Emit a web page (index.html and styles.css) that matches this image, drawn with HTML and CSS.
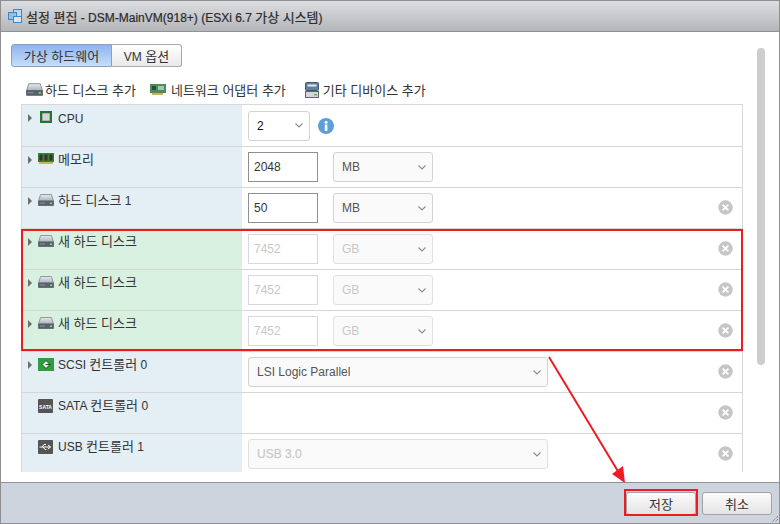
FILE: index.html
```html
<!DOCTYPE html>
<html lang="ko">
<head>
<meta charset="utf-8">
<title>설정 편집</title>
<link rel="stylesheet" href="styles.css">
</head>
<body>
<svg class="defs" width="0" height="0" aria-hidden="true">
  <defs>
    <linearGradient id="diskTop" x1="0" y1="0" x2="0" y2="1">
      <stop offset="0" stop-color="#e6e9ec"/><stop offset="1" stop-color="#aab3bc"/>
    </linearGradient>
    <symbol id="disk" viewBox="0 0 16 12">
      <path d="M2.600 .5h10.800l2.100 6.500H.5z" fill="url(#diskTop)" stroke="#7d858d" stroke-width=".8"/>
      <path d="M.5 7h15v4.500H.5z" fill="#59626b" stroke="#59626b" stroke-width=".8"/>
      <rect x="12" y="8.500" width="2" height="1.500" fill="#8fdc6a"/>
      <rect x="2" y="8.500" width="5" height="1" fill="#8a939c"/>
    </symbol>
    <symbol id="tri" viewBox="0 0 4 8"><path d="M0 0l4 4-4 4z" fill="#6e6e6e"/></symbol>
    <symbol id="chev" viewBox="0 0 8 5"><path d="M.5 .5l3.500 3.500 3.500-3.500" fill="none" stroke="#8c8c8c" stroke-width="1.100"/></symbol>
    <symbol id="close" viewBox="0 0 15 15">
      <circle cx="7.500" cy="7.500" r="7.200" fill="#c6c6c6"/>
      <path d="M4.600 4.600l5.800 5.800M10.400 4.600l-5.800 5.800" stroke="#fff" stroke-width="1.900"/>
    </symbol>
  </defs>
</svg>
<div class="window">
  <header class="titlebar">
    <svg class="title-icon" viewBox="0 0 16 16" width="16" height="16">
      <rect x="6.500" y="1.500" width="8" height="7" fill="#bcd9f2" stroke="#3f86c6"/>
      <rect x="1.500" y="4.500" width="8" height="7" fill="#8fc0e8" stroke="#3f86c6"/>
      <rect x="6.500" y="8.500" width="8" height="6" fill="#d6e8f7" stroke="#3f86c6"/>
    </svg>
    <span class="title-text"><span class="ko">설정 편집</span> - DSM-MainVM(918+) (ESXi 6.7 <span class="ko">가상 시스템</span>)</span>
  </header>
  <main class="content">
    <nav class="tabs">
      <button class="tab tab-active"><span class="ko">가상 하드웨어</span></button>
      <button class="tab">VM <span class="ko">옵션</span></button>
    </nav>
    <div class="toolbar">
      <span class="tool tool-disk">
        <svg class="tool-icon" width="17" height="15"><use href="#disk"/></svg><span class="ko">하드 디스크 추가</span>
      </span>
      <span class="tool tool-net">
        <svg class="tool-icon" viewBox="0 0 16 11" width="16" height="11">
          <rect width="16" height="9" fill="#4d8a5f"/>
          <rect x="2" y="2" width="4" height="4" fill="#2c4d38"/>
          <rect x="8" y="2" width="6" height="4" fill="#a5c7ae"/>
          <rect x="2" y="9" width="11" height="2" fill="#c9b45d"/>
        </svg><span class="ko">네트워크 어댑터 추가</span>
      </span>
      <span class="tool tool-other">
        <svg class="tool-icon" viewBox="0 0 14 16" width="14" height="16">
          <rect x=".5" y=".5" width="13" height="8" rx="1" fill="#5f7f9e" stroke="#46596b"/>
          <rect x="2.500" y="2.500" width="9" height="2" fill="#dfe9f2"/>
          <rect x=".5" y="9.500" width="13" height="6" fill="#d3d8dc" stroke="#5b6670"/>
          <rect x="9" y="12" width="3" height="1.500" fill="#6fb04f"/>
        </svg><span class="ko">기타 디바이스 추가</span>
      </span>
    </div>
    <div class="scroller">
      <div class="hw-table">
        <div class="row">
          <div class="label"><svg class="tri" width="4" height="8"><use href="#tri"/></svg>
            <span class="icon-box icon-cpu"><svg viewBox="0 0 12 12" width="12" height="12">
              <rect width="12" height="12" fill="#1f7a2c"/><rect x="2" y="2" width="8" height="8" fill="#d4d7d4" stroke="#555" stroke-width=".6"/>
            </svg></span><span class="latin-only">CPU</span></div>
          <div class="value">
            <div class="select s-cpu"><span class="strong">2</span><svg class="chev" width="8" height="5"><use href="#chev"/></svg></div>
            <svg class="info" viewBox="0 0 16 16" width="16" height="16">
              <circle cx="8" cy="8" r="8" fill="#5d9fd8"/>
              <rect x="6.800" y="6.500" width="2.600" height="6.500" fill="#fff"/>
              <circle cx="8.100" cy="4.300" r="1.500" fill="#fff"/>
            </svg>
          </div>
        </div>
        <div class="row">
          <div class="label"><svg class="tri" width="4" height="8"><use href="#tri"/></svg>
            <span class="icon-box"><svg viewBox="0 0 16 11" width="16" height="11">
              <rect width="16" height="9" fill="#3d7f2e"/>
              <rect x="1.500" y="1.500" width="3" height="6" fill="#333"/><rect x="6.500" y="1.500" width="3" height="6" fill="#333"/><rect x="11.500" y="1.500" width="3" height="6" fill="#333"/>
              <rect x="1" y="9" width="14" height="2" fill="#c9b45d"/>
            </svg></span><span class="ko">메모리</span></div>
          <div class="value"><div class="input">2048</div><div class="select s-unit"><span>MB</span><svg class="chev" width="8" height="5"><use href="#chev"/></svg></div></div>
        </div>
        <div class="row">
          <div class="label"><svg class="tri" width="4" height="8"><use href="#tri"/></svg><span class="icon-box"><svg width="16" height="12"><use href="#disk"/></svg></span><span><span class="ko">하드 디스크</span> 1</span></div>
          <div class="value"><div class="input">50</div><div class="select s-unit"><span>MB</span><svg class="chev" width="8" height="5"><use href="#chev"/></svg></div><svg class="close" width="15" height="15"><use href="#close"/></svg></div>
        </div>
        <div class="row row-new">
          <div class="label"><svg class="tri" width="4" height="8"><use href="#tri"/></svg><span class="icon-box"><svg width="16" height="12"><use href="#disk"/></svg></span><span class="ko">새 하드 디스크</span></div>
          <div class="value"><div class="input disabled">7452</div><div class="select s-unit disabled"><span>GB</span><svg class="chev" width="8" height="5"><use href="#chev"/></svg></div><svg class="close" width="15" height="15"><use href="#close"/></svg></div>
        </div>
        <div class="row row-new">
          <div class="label"><svg class="tri" width="4" height="8"><use href="#tri"/></svg><span class="icon-box"><svg width="16" height="12"><use href="#disk"/></svg></span><span class="ko">새 하드 디스크</span></div>
          <div class="value"><div class="input disabled">7452</div><div class="select s-unit disabled"><span>GB</span><svg class="chev" width="8" height="5"><use href="#chev"/></svg></div><svg class="close" width="15" height="15"><use href="#close"/></svg></div>
        </div>
        <div class="row row-new">
          <div class="label"><svg class="tri" width="4" height="8"><use href="#tri"/></svg><span class="icon-box"><svg width="16" height="12"><use href="#disk"/></svg></span><span class="ko">새 하드 디스크</span></div>
          <div class="value"><div class="input disabled">7452</div><div class="select s-unit disabled"><span>GB</span><svg class="chev" width="8" height="5"><use href="#chev"/></svg></div><svg class="close" width="15" height="15"><use href="#close"/></svg></div>
        </div>
        <div class="row">
          <div class="label"><svg class="tri" width="4" height="8"><use href="#tri"/></svg>
            <span class="icon-box"><svg viewBox="0 0 16 13" width="16" height="13">
              <rect width="16" height="13" fill="#2f9e3f"/><path d="M8 2.500l-4 4 4 4 4-4z" fill="#e8f5e8" stroke="#14541f"/><path d="M7.500 6.500h5" stroke="#14541f"/>
            </svg></span><span>SCSI <span class="ko">컨트롤러</span> 0</span></div>
          <div class="value"><div class="select s-wide"><span>LSI Logic Parallel</span><svg class="chev" width="8" height="5"><use href="#chev"/></svg></div><svg class="close" width="15" height="15"><use href="#close"/></svg></div>
        </div>
        <div class="row">
          <div class="label label-plain">
            <span class="icon-box"><svg viewBox="0 0 15 14" width="15" height="14"><rect width="15" height="14" rx="1" fill="#555"/><text x="7.500" y="9.500" class="chip-text">SATA</text></svg></span><span>SATA <span class="ko">컨트롤러</span> 0</span></div>
          <div class="value"><svg class="close" width="15" height="15"><use href="#close"/></svg></div>
        </div>
        <div class="row">
          <div class="label label-plain">
            <span class="icon-box"><svg viewBox="0 0 15 14" width="15" height="14"><rect width="15" height="14" rx="1" fill="#555"/><path d="M1.500 7h11M10 5l2.500 2-2.500 2M4 7l2-2.500h2M5 7l2 2.500h1.500" fill="none" stroke="#fff"/></svg></span><span>USB <span class="ko">컨트롤러</span> 1</span></div>
          <div class="value"><div class="select s-wide disabled"><span class="faint-bold">USB 3.0</span><svg class="chev" width="8" height="5"><use href="#chev"/></svg></div><svg class="close" width="15" height="15"><use href="#close"/></svg></div>
        </div>
      </div>
    </div>
    <div class="scrollbar"></div>
  </main>
  <footer class="footer">
    <button class="btn"><span class="ko">저장</span></button>
    <button class="btn"><span class="ko">취소</span></button>
    <svg class="grip" viewBox="0 0 8 8" width="8" height="8"><path d="M7 1L1 7M7 4L4 7M7 7h0" stroke="#666" stroke-dasharray="1 1"/></svg>
  </footer>
  <div class="highlight"></div>
  <div class="highlight-save"></div>
  <svg class="arrow" viewBox="0 0 780 524" width="780" height="524">
    <path d="M549 357L619 473" stroke="#ed1c24" stroke-width="2" fill="none"/>
    <path d="M625 483L612 474 623 466z" fill="#ed1c24"/>
  </svg>
</div>
</body>
</html>
```
FILE: styles.css
```css
* { box-sizing: border-box; }
html, body { margin: 0; padding: 0; }
body {
  width: 780px;
  height: 524px;
  overflow: hidden;
  font: 12px "Liberation Sans", "Noto Sans CJK KR", sans-serif;
  color: #333;
  background: #fff;
}
.ko { font-size: 13px; }
.strong { color: #111; }
.latin-only { padding-top: 1px; }
.defs { position: absolute; }
.window {
  position: relative;
  width: 780px;
  height: 524px;
  display: flex;
  flex-direction: column;
  border: 1px solid #8f8f8f;
  background: #fff;
}
.titlebar {
  height: 31px;
  flex: none;
  display: flex;
  align-items: center;
  padding-left: 6px;
  gap: 3px;
  background: linear-gradient(#dcdde1, #b4b6b9);
  border-bottom: 1px solid #8f9194;
}
.title-text { font-size: 12px; font-weight: 400; color: #2b2b2b; -webkit-text-stroke: .2px #2b2b2b; }
.content {
  flex: 1;
  min-height: 0;
  overflow: hidden;
  display: flex;
  flex-direction: column;
  padding: 12px 0 10px 10px;
  position: relative;
}
.tabs { display: flex; flex: none; height: 23px; }
.tab {
  font: inherit;
  color: #333;
  padding: 0;
  height: 23px;
  width: 70px;
  background: linear-gradient(#fff, #e9e9e9);
  border: 1px solid #a9a9a9;
  border-left: 0;
  border-radius: 0 3px 3px 0;
}
.tab.tab-active {
  width: 101px;
  background: linear-gradient(#8fb4ee, #c5defa);
  border: 1px solid #8e9fb8;
  border-radius: 3px 0 0 3px;
}
.toolbar {
  flex: none;
  height: 37px;
  display: flex;
  align-items: center;
  padding: 8px 0 0 15px;
  color: #333;
}
.tool { display: flex; align-items: center; margin-right: 14px; white-space: nowrap; }
.tool-disk { gap: 2px; }
.tool-net { margin-right: 19px; gap: 5px; }
.tool-other { gap: 4px; }
.scroller { flex: 1; min-height: 0; overflow: hidden; padding-left: 10px; }
.hw-table {
  width: 722px;
  border: 1px solid #d8d8d8;
  border-bottom: 0;
}
.row { display: flex; height: 41px; }
.row + .row .label { border-top: 1px solid #d6d6d6; }
.row + .row .value { border-top: 1px solid #d6d6d6; }
.label {
  width: 220px;
  flex: none;
  display: flex;
  align-items: flex-start;
  padding: 4px 0 0 6px;
  background: #e3eef5;
  color: #333;
  line-height: 18px;
}
.row-new .label { background: #d8f0e0; }
.tri { margin: 5px 6px 0 0; flex: none; }
.icon-box { width: 20px; height: 18px; flex: none; display: flex; align-items: flex-start; padding-top: 2px; }
.icon-cpu { padding-left: 2px; }
.label-plain { padding-left: 16px; }
.chip-text { font: 700 5px "Liberation Sans", sans-serif; fill: #fff; text-anchor: middle; }
.value {
  flex: 1;
  display: flex;
  align-items: center;
  padding: 0 9px 0 6px;
}
.input {
  width: 70px;
  height: 30px;
  border: 1px solid #8f8f8f;
  padding: 0 5px;
  display: flex;
  align-items: center;
  color: #333;
  margin-right: 15px;
}
.input.disabled { border-color: #d8d8d8; color: #c8c8c8; }
.select {
  height: 30px;
  display: flex;
  align-items: center;
  justify-content: space-between;
  padding: 0 6px 0 8px;
  background: #fafafa;
  border: 1px solid #d2d2d2;
  border-radius: 3px;
  color: #555;
}
.select.disabled { color: #c8c8c8; border-color: #e0e0e0; }
.faint-bold { -webkit-text-stroke: .2px #c8c8c8; }
.s-cpu { width: 62px; background: #fff; }
.s-unit { width: 100px; }
.s-wide { width: 300px; }
.info { margin-left: 8px; }
.close { margin-left: auto; margin-bottom: 2px; }
.scrollbar {
  position: absolute;
  left: 756px;
  top: 16px;
  width: 8px;
  height: 317px;
  background: #cdcdcd;
  border-radius: 4px;
}
.footer {
  flex: none;
  height: 41px;
  display: flex;
  align-items: center;
  justify-content: flex-end;
  gap: 6px;
  padding: 0 7px 0 0;
  background: #ced4dd;
  border-top: 1px solid #8f9194;
  position: relative;
}
.btn {
  font: inherit;
  color: #333;
  width: 70px;
  height: 23px;
  padding: 0;
  background: linear-gradient(#fbfbfb, #e4e4e4);
  border: 1px solid #a3a3a3;
  border-radius: 3px;
}
.grip { position: absolute; right: 0; bottom: 0; }
.highlight {
  position: absolute;
  left: 20px;
  top: 228px;
  width: 722px;
  height: 122px;
  border: 2px solid #ed1c24;
}
.highlight-save {
  position: absolute;
  left: 623px;
  top: 488px;
  width: 74px;
  height: 27px;
  border: 2px solid #ed1c24;
}
.arrow { position: absolute; left: -1px; top: -1px; pointer-events: none; }
```
